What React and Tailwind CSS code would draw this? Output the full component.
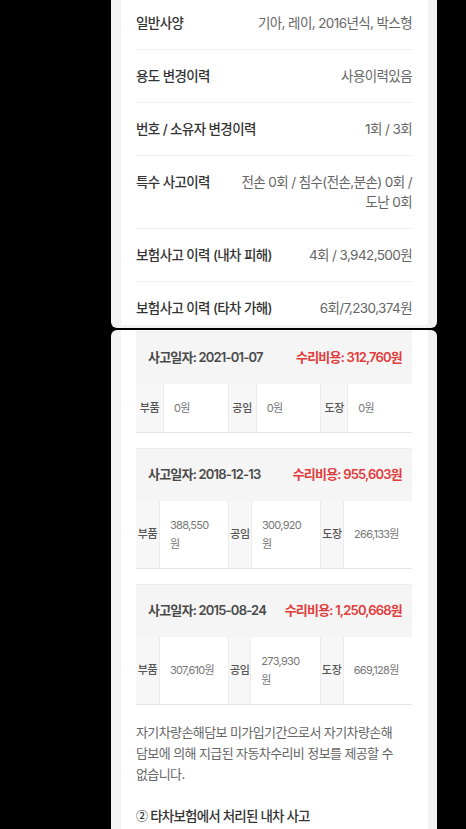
import React from 'react';

const font = { fontFamily: 'Inter, "Noto Sans CJK KR", sans-serif' };

const specs = [
  { label: '일반사양', value: ['기아, 레이, 2016년식, 박스형'] },
  { label: '용도 변경이력', value: ['사용이력있음'] },
  { label: '번호 / 소유자 변경이력', value: ['1회 / 3회'] },
  { label: '특수 사고이력', value: ['전손 0회 / 침수(전손,분손) 0회 /', '도난 0회'] },
  { label: '보험사고 이력 (내차 피해)', value: ['4회 / 3,942,500원'] },
  { label: '보험사고 이력 (타차 가해)', value: ['6회/7,230,374원'] },
];

const accidents = [
  {
    date: '2021-01-07',
    cost: '312,760원',
    cols: 'grid-cols-[27px_1fr_28px_1fr_27px_1fr]',
    rowH: 'h-[49px]',
    parts: [
      ['부품', ['0원']],
      ['공임', ['0원']],
      ['도장', ['0원']],
    ],
  },
  {
    date: '2018-12-13',
    cost: '955,603원',
    cols: 'grid-cols-[23px_1fr_23px_1fr_23px_1fr]',
    rowH: 'h-[68px]',
    parts: [
      ['부품', ['388,550', '원']],
      ['공임', ['300,920', '원']],
      ['도장', ['266,133원']],
    ],
  },
  {
    date: '2015-08-24',
    cost: '1,250,668원',
    cols: 'grid-cols-[23px_1fr_22px_1fr_23px_1fr]',
    rowH: 'h-[68px]',
    parts: [
      ['부품', ['307,610원']],
      ['공임', ['273,930', '원']],
      ['도장', ['669,128원']],
    ],
  },
];

const notice = [
  '자기차량손해담보 미가입기간으로서 자기차량손해',
  '담보에 의해 지급된 자동차수리비 정보를 제공할 수',
  '없습니다.',
];

function SpecRow({ label, value, last }) {
  return (
    <div className={`flex justify-between py-4 leading-[20px] text-[13.5px] tracking-[-0.6px] ${last ? '' : 'border-b border-[#efefef]'}`}>
      <span className="font-medium text-[#333]">{label}</span>
      <span className="text-right text-[#666]">
        {value.map((v, i) => (
          <div key={i}>{v}</div>
        ))}
      </span>
    </div>
  );
}

function AccidentTable({ item }) {
  return (
    <div className="border-t border-[#ececec]">
      <div className="flex h-[52px] items-center justify-between bg-[#f5f5f5] pl-[12px] pr-[10px] text-[13px] font-semibold tracking-[-0.8px]">
        <span className="text-[#4a4a4a]">사고일자: {item.date}</span>
        <span className="text-[#e23b3b]">수리비용: {item.cost}</span>
      </div>
      <div className={`grid ${item.cols} ${item.rowH} border-b border-[#e6e6e6]`}>
        {item.parts.map(([name, val], i) => (
          <React.Fragment key={name}>
            <div className={`flex items-center justify-center bg-[#f7f7f7] text-[11px] font-medium tracking-[-0.3px] text-[#555] ${i > 0 ? 'border-l border-[#ececec]' : ''}`}>
              {name}
            </div>
            <div className="flex flex-col justify-center border-l border-[#ececec] pl-[10px] text-[11px] leading-[19px] tracking-[-0.7px] text-[#777]">
              {val.map((v, j) => (
                <span key={j}>{v}</span>
              ))}
            </div>
          </React.Fragment>
        ))}
      </div>
    </div>
  );
}

export default function App() {
  return (
    <div className="h-[829px] overflow-hidden bg-black" style={font}>
      <div className="ml-[111px] w-[326px]">
        <div className="h-[328px] overflow-hidden rounded-b-[6px] bg-[#f3f3f3] pl-[10px] pr-[9px]">
          <div className="h-full bg-white pl-[15px] pr-[16px]">
            <div className="-mt-[3px]">
              {specs.map((s, i) => (
                <SpecRow key={s.label} {...s} last={i === specs.length - 1} />
              ))}
            </div>
          </div>
        </div>

        <div className="mt-[2px] h-[520px] overflow-hidden rounded-t-[6px] bg-[#f3f3f3] pl-[10px] pr-[9px]">
          <div className="h-full bg-white pl-[15px] pr-[16px] pt-[1px]">
            <div className="flex flex-col gap-[15px]">
              {accidents.map((a) => (
                <AccidentTable key={a.date} item={a} />
              ))}
            </div>
            <p className="mt-[17px] text-[13px] leading-[21px] tracking-[-0.6px] text-[#666]">
              {notice.map((line) => (
                <span key={line} className="block whitespace-nowrap">
                  {line}
                </span>
              ))}
            </p>
            <div className="mt-[21px] flex items-center gap-[3px] text-[13.5px] font-medium leading-[20px] tracking-[-0.8px] text-[#333]">
              <span className="text-[12px]" style={{ fontFamily: '"Noto Sans CJK KR", sans-serif' }}>
                ②
              </span>
              <span>타차보험에서 처리된 내차 사고</span>
            </div>
          </div>
        </div>
      </div>
    </div>
  );
}
